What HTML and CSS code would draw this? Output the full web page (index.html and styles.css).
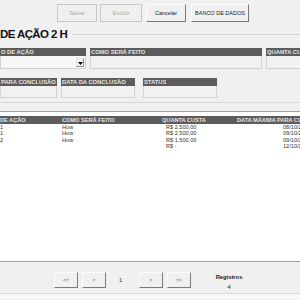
FILE: index.html
```
<!DOCTYPE html>
<html lang="pt-BR">
<head>
    <title>Plano de Ação 2 H</title>
    <link rel="stylesheet" href="styles.css">
</head>
<body>
    <div class="form">
        <div class="toolbar">
            <button class="btn disabled w-salvar">Salvar</button>
            <button class="btn disabled w-excluir">Excluir</button>
            <button class="btn w-cancelar">Cancelar</button>
            <button class="btn w-banco">BANCO DE DADOS</button>
        </div>

        <div class="group-title">
            <span class="title">DE AÇÃO 2 H</span>
            <span class="title-line"></span>
        </div>

        <div class="field-row row-one">
            <div class="field f-acao">
                <div class="label">O DE AÇÃO</div>
                <div class="box combo">
                    <span class="combo-arrow"><svg width="5" height="3" viewBox="0 0 5 3"><path d="M0 0h5L2.5 3z" fill="#000"/></svg></span>
                </div>
            </div>
            <div class="field f-como">
                <div class="label">COMO SERÁ FEITO</div>
                <div class="box"></div>
            </div>
            <div class="field f-quanto">
                <div class="label">QUANTA CUSTA</div>
                <div class="box"></div>
            </div>
        </div>

        <div class="field-row row-two">
            <div class="field f-prazo">
                <div class="label">PARA CONCLUSÃO</div>
                <div class="box"></div>
            </div>
            <div class="field f-data">
                <div class="label">DATA DA CONCLUSÃO</div>
                <div class="box"></div>
            </div>
            <div class="field f-status">
                <div class="label">STATUS</div>
                <div class="box"></div>
            </div>
        </div>

        <div class="group-bottom"></div>

        <div class="list">
            <div class="list-head">
                <span>DE AÇÃO</span>
                <span>COMO SERÁ FEITO</span>
                <span>QUANTA CUSTA</span>
                <span>DATA MÁXIMA PARA CONCLUSÃO</span>
            </div>
            <div class="list-row">
                <span>1</span><span>How</span><span class="money">R$ 2.500,00</span><span class="date">08/10/2021</span>
            </div>
            <div class="list-row">
                <span>1</span><span>How</span><span class="money">R$ 2.500,00</span><span class="date">09/10/2021</span>
            </div>
            <div class="list-row">
                <span>2</span><span>How</span><span class="money">R$ 1.500,00</span><span class="date">09/10/2021</span>
            </div>
            <div class="list-row">
                <span></span><span></span><span class="money">R$ -</span><span class="date">12/10/2021</span>
            </div>
        </div>

        <div class="pager">
            <button class="btn page-btn">&lt;&lt;</button>
            <button class="btn page-btn">&lt;</button>
            <span class="page-num">1</span>
            <button class="btn page-btn">&gt;</button>
            <button class="btn page-btn">&gt;&gt;</button>
            <div class="records">
                <div class="records-label">Registros</div>
                <div class="records-count">4</div>
            </div>
        </div>
        <div class="footer"></div>
    </div>
</body>
</html>
```

FILE: styles.css
```
body {
    margin: 0;
    background: #f0f0f0;
    font-family: 'Liberation Sans', Arial, sans-serif;
    color: #222;
    width: 300px;
    height: 300px;
    overflow: hidden;
}
.form {
    width: 300px;
}
.toolbar {
    display: flex;
    padding: 4px 0 0 57px;
    height: 18px;
}
.btn {
    background: #f0f0f0;
    border: 1px solid;
    border-color: #fcfcfc #7a7a7a #7a7a7a #fcfcfc;
    font-family: 'Liberation Sans', Arial, sans-serif;
    font-size: 5.5px;
    color: #222;
    padding: 0;
    height: 18px;
    margin: 0;
    flex-shrink: 0;
}
.btn.disabled {
    color: #a8a8a8;
    border-color: #c8c8c8;
}
.w-salvar { width: 40px; border-color: #8c8c8c; }
.w-excluir { width: 42px; margin-left: 3px; }
.w-cancelar { width: 40px; margin-left: 4px; }
.w-banco { width: 58px; margin-left: 5px; }

.group-title {
    display: flex;
    align-items: center;
    margin-top: 5px;
    height: 14px;
}
.title {
    font-size: 11.5px;
    font-weight: bold;
    color: #111;
    letter-spacing: -0.6px;
    white-space: nowrap;
}
.title-line {
    flex: 1;
    height: 1px;
    background: #d4d4d4;
    margin-left: 5px;
}

.field-row {
    display: flex;
}
.field {
    flex-shrink: 0;
}
.row-one {
    margin-top: 7px;
    gap: 4px;
}
.row-two {
    margin-top: 9px;
}
.label {
    background: #5c5c5c;
    color: #e4e4e4;
    font-size: 5.8px;
    font-weight: bold;
    height: 8px;
    line-height: 8.5px;
    padding-left: 1px;
    white-space: nowrap;
    overflow: hidden;
}
.box {
    height: 11px;
    border: 1px solid #d2d2d2;
    border-top: none;
    background: #f2f2f2;
    position: relative;
}
.row-one .box { height: 12px; }
.combo {
    background: #f7f7f7;
}
.combo-arrow {
    position: absolute;
    right: 1px;
    top: 2px;
    width: 8px;
    height: 9px;
    background: #f4f4f4;
    border: 1px solid;
    border-color: #e0e0e0 #8a8a8a #8a8a8a #e0e0e0;
    box-sizing: border-box;
    display: flex;
    align-items: flex-end;
    justify-content: center;
    padding-bottom: 1px;
}
.f-acao { width: 86px; }
.f-como { width: 172px; }
.f-quanto { width: 60px; }
.f-prazo { width: 57px; }
.f-data { width: 74px; margin-left: 4px; }
.f-status { width: 74px; margin-left: 8px; }

.group-bottom {
    margin-top: 4px;
    height: 1px;
    background: #d8d8d8;
}

.list {
    margin-top: 8px;
    border-top: 1px solid #a0a0a0;
    border-bottom: 1px solid #a0a0a0;
    background: #fff;
    height: 151px;
    padding-top: 4px;
    box-sizing: border-box;
    font-size: 5.6px;
}
.list-head, .list-row {
    display: grid;
    grid-template-columns: 62px 100px 75px 1fr;
    white-space: nowrap;
}
.list-head {
    background: #5c5c5c;
    color: #e4e4e4;
    font-weight: bold;
    height: 8px;
    line-height: 8.5px;
}
.list-row {
    height: 6.3px;
    line-height: 6.3px;
    color: #333;
}
.list-row:first-of-type { margin-top: 1px; }
.money { padding-left: 4px; }
.date { padding-left: 46px; }

.pager {
    display: flex;
    align-items: flex-start;
    padding: 10px 0 0 54px;
    height: 21px;
}
.page-btn {
    width: 24px;
    height: 16px;
    margin-right: 4px;
    font-size: 5px;
    color: #555;
}
.page-num {
    width: 29px;
    text-align: center;
    font-size: 5.5px;
    line-height: 16px;
    margin-left: -4px;
    margin-right: 4px;
}
.records {
    margin-left: 17px;
    text-align: center;
    width: 34px;
    font-size: 5.8px;
    padding-top: 2px;
}
.records-label { font-weight: bold; }
.records-count { margin-top: 4px; }
.footer {
    border-top: 1px solid #d9d9d9;
    background: #f7f7f7;
    height: 5px;
}
```
